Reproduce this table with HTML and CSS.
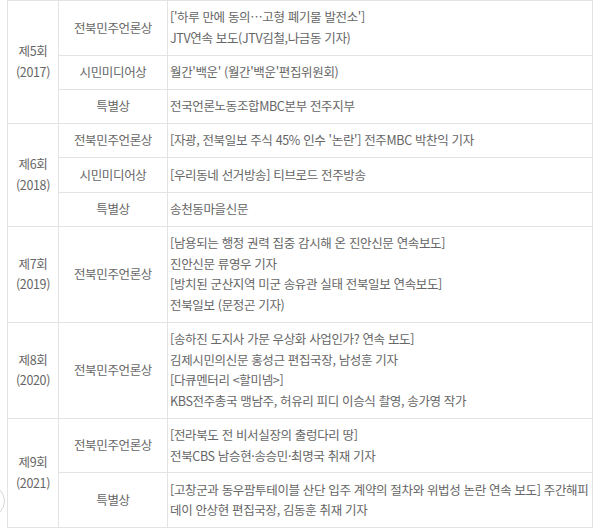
FILE: index.html
```html
<!DOCTYPE html>
<html lang="ko">
<head>
<meta charset="utf-8">
<link rel="stylesheet" href="styles.css">
</head>
<body>
<div class="page">
  <table class="awards">
    <colgroup>
      <col class="c-round">
      <col class="c-prize">
      <col class="c-work">
    </colgroup>
    <tbody>
      <tr>
        <td class="round" rowspan="3">제5회<br>(2017)</td>
        <td class="prize">전북민주언론상</td>
        <td class="work">['하루 만에 동의…고형 폐기물 발전소']<br>JTV연속 보도(JTV김철,나금동 기자)</td>
      </tr>
      <tr>
        <td class="prize">시민미디어상</td>
        <td class="work">월간'백운' (월간'백운'편집위원회)</td>
      </tr>
      <tr>
        <td class="prize">특별상</td>
        <td class="work">전국언론노동조합MBC본부 전주지부</td>
      </tr>
      <tr>
        <td class="round" rowspan="3">제6회<br>(2018)</td>
        <td class="prize">전북민주언론상</td>
        <td class="work">[자광, 전북일보 주식 45% 인수 '논란'] 전주MBC 박찬익 기자</td>
      </tr>
      <tr>
        <td class="prize">시민미디어상</td>
        <td class="work">[우리동네 선거방송] 티브로드 전주방송</td>
      </tr>
      <tr>
        <td class="prize">특별상</td>
        <td class="work">송천동마을신문</td>
      </tr>
      <tr>
        <td class="round">제7회<br>(2019)</td>
        <td class="prize">전북민주언론상</td>
        <td class="work">[남용되는 행정 권력 집중 감시해 온 진안신문 연속보도]<br>진안신문 류영우 기자<br>[방치된 군산지역 미군 송유관 실태 전북일보 연속보도]<br>전북일보 (문정곤 기자)</td>
      </tr>
      <tr>
        <td class="round">제8회<br>(2020)</td>
        <td class="prize">전북민주언론상</td>
        <td class="work">[송하진 도지사 가문 우상화 사업인가? 연속 보도]<br>김제시민의신문 홍성근 편집국장, 남성훈 기자<br>[다큐멘터리 &lt;할미넴&gt;]<br>KBS전주총국 맹남주, 허유리 피디 이승식 촬영, 송가영 작가</td>
      </tr>
      <tr>
        <td class="round" rowspan="2">제9회<br>(2021)</td>
        <td class="prize">전북민주언론상</td>
        <td class="work">[전라북도 전 비서실장의 출렁다리 땅]<br>전북CBS 남승현·송승민·최명국 취재 기자</td>
      </tr>
      <tr>
        <td class="prize">특별상</td>
        <td class="work">[고창군과 동우팜투테이블 산단 입주 계약의 절차와 위법성 논란 연속 보도] 주간해피데이 안상현 편집국장, 김동훈 취재 기자</td>
      </tr>
    </tbody>
  </table>
  <div class="rule"></div>
  <div class="nav-circle"></div>
</div>
</body>
</html>
```

FILE: styles.css
```css
html, body {
  margin: 0;
  padding: 0;
  background: #fff;
}

.page {
  position: relative;
  width: 600px;
  height: 531px;
  overflow: hidden;
  font-family: "Noto Sans CJK KR", "Noto Sans", sans-serif;
  font-size: 12.5px;
  letter-spacing: -0.35px;
  font-weight: 400;
  color: #666;
  font-feature-settings: "palt";
}

.awards {
  margin: 0 0 0 7px;
  width: 586px;
  border-collapse: collapse;
  table-layout: fixed;
}

.c-round { width: 51px; }
.c-prize { width: 109px; }

.awards td {
  border: 1px solid #e3e3e3;
  line-height: 20.6px;
  padding: 6.3px 2px;
  vertical-align: middle;
}

.awards td.round,
.awards td.prize {
  text-align: center;
}

.awards td.work {
  text-align: left;
  padding-left: 2px;
  padding-right: 2px;
}

.rule {
  margin-top: 6px;
  height: 3px;
  background: #e4e4e4;
}

.nav-circle {
  position: absolute;
  left: -27px;
  top: 485px;
  width: 30px;
  height: 30px;
  border: 1px solid #d6d6d6;
  border-radius: 50%;
  background: #fff;
}
```
